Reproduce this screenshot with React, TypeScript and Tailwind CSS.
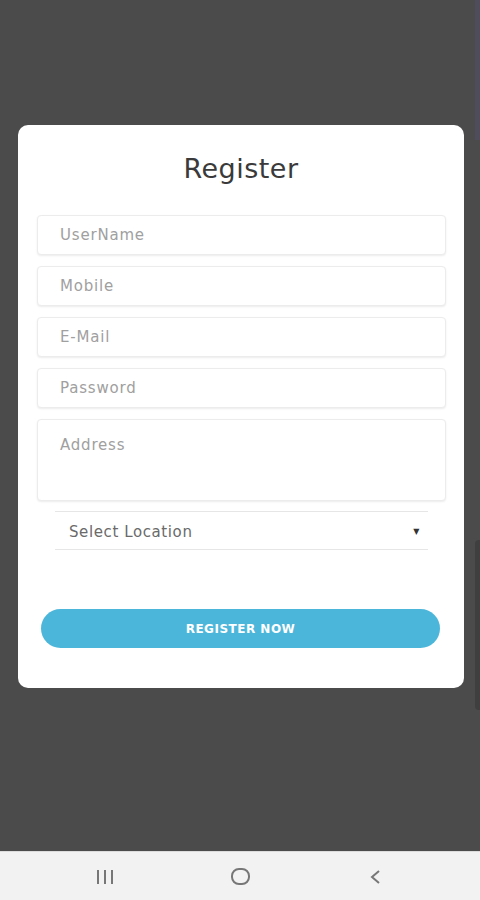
import React from "react";

const font = { fontFamily: '"DejaVu Sans", "Noto Sans", sans-serif' };

function Field({ label, tall }: { label: string; tall?: boolean }) {
  return (
    <div
      className={`w-full rounded-[4px] border border-[#ececec] bg-white shadow-[0_1px_2px_rgba(0,0,0,0.08)] pl-[22px] text-[15px] tracking-[0.8px] text-[#a0a0a0] ${
        tall ? "h-[82px] pt-[14px]" : "h-[40px] flex items-center"
      }`}
    >
      {label}
    </div>
  );
}

export default function App() {
  return (
    <div className="w-[480px] h-[900px] bg-[#4b4b4b] flex flex-col relative overflow-hidden" style={font}>
      <div className="absolute right-0 top-0 w-[5px] h-[140px] bg-[#4f4d5c]" />
      <div className="absolute right-0 top-[540px] w-[5px] h-[170px] rounded-l bg-[#3f3f3f]" />
      <div className="flex-1 pt-[125px] pl-[18px]">
        <div className="w-[446px] h-[563px] bg-white rounded-[10px] px-[19px] flex flex-col">
          <div className="text-center text-[27px] text-[#3a3a3a] pt-[24px] h-[90px] tracking-[0.5px]">Register</div>
          <div className="flex flex-col gap-[11px] pr-0 w-[409px]">
            <Field label="UserName" />
            <Field label="Mobile" />
            <Field label="E-Mail" />
            <Field label="Password" />
            <Field label="Address" tall />
          </div>
          <div className="ml-[18px] mt-[10px] w-[373px] h-[39px] border-y border-[#e6e6e6] flex items-center justify-between pl-[14px] pr-[8px] pt-[3px] text-[15px] tracking-[0.6px] text-[#6a6a6a]">
            <span>Select Location</span>
            <span className="text-[8px] text-[#333]">▼</span>
          </div>
          <div className="mt-[59px] ml-[4px] w-[399px] h-[39px] rounded-full bg-[#4cb6da] flex items-center justify-center text-white text-[12px] font-bold tracking-[0.5px]">
            REGISTER NOW
          </div>
        </div>
      </div>
      <div className="h-[49px] bg-[#f2f2f2] border-t border-[#dcdcdc] flex items-center text-[#777]">
        <div className="absolute left-[97px] bottom-[16px] flex gap-[5px]">
          <div className="w-[2px] h-[14px] bg-[#777]" />
          <div className="w-[2px] h-[14px] bg-[#777]" />
          <div className="w-[2px] h-[14px] bg-[#777]" />
        </div>
        <div className="absolute left-[231px] bottom-[15px] w-[19px] h-[17px] rounded-[8px] border-2 border-[#777]" />
        <svg className="absolute left-[369px] bottom-[15px]" width="12" height="16" viewBox="0 0 12 16">
          <path d="M10 2 L3 8 L10 14" fill="none" stroke="#777" strokeWidth="2" />
        </svg>
      </div>
    </div>
  );
}
